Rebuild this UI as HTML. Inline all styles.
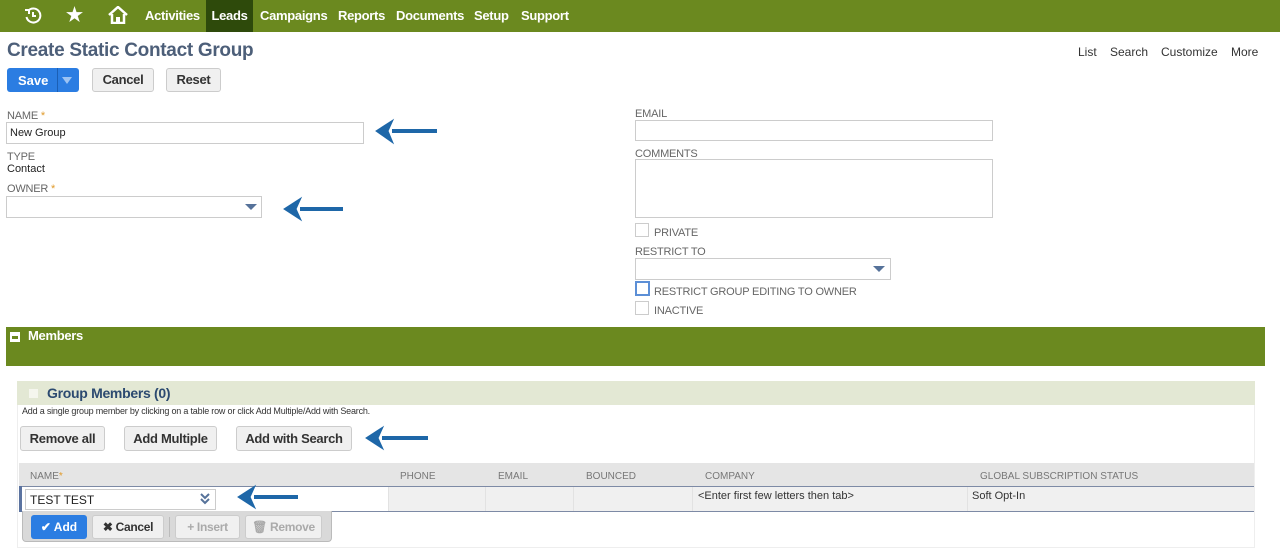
<!DOCTYPE html>
<html><head><meta charset="utf-8"><style>
*{box-sizing:border-box;margin:0;padding:0}
body{width:1280px;height:557px;overflow:hidden;background:#fff;font-family:"Liberation Sans",Arial,sans-serif;position:relative;color:#333}
.a{position:absolute}
.nav{left:0;top:0;width:1280px;height:32px;background:#6b891f}
.nav span{position:absolute;top:0;height:32px;line-height:32px;color:#fff;font-weight:bold;font-size:13px;letter-spacing:-0.3px}
.lbl{position:absolute;font-size:11px;color:#666;letter-spacing:-0.2px}
.inp{position:absolute;border:1px solid #ccc;background:#fff}
.btn{position:absolute;background:#f0f0f0;border:1px solid #ccc;border-radius:3px;font-size:13px;font-weight:bold;color:#333;text-align:center;letter-spacing:-0.3px}
.cb{position:absolute;width:14px;height:14px;border:1px solid #ccc;background:#fff}
.tri{position:absolute;width:0;height:0;border-left:6px solid transparent;border-right:6px solid transparent;border-top:6px solid #56729a}
.th{position:absolute;top:471px;font-size:10px;color:#777}
.col{position:absolute;top:487px;height:24px;border-left:1px solid #e2e2e2}
</style></head><body>
<div class="a nav">
<svg class="a" style="left:24px;top:7px" width="18" height="18" viewBox="0 0 18 18"><path d="M4 4 A7 7 0 1 1 2.5 10" fill="none" stroke="#fff" stroke-width="2"/><path d="M1 3 L5 3 L5 7" fill="none" stroke="#fff" stroke-width="2"/><path d="M9 5 V9 H12" fill="none" stroke="#fff" stroke-width="2"/></svg>
<span style="left:66px;font-size:19px">★</span>
<svg class="a" style="left:108px;top:6px" width="20" height="18" viewBox="0 0 20 18"><path d="M1 9 L10 1 L19 9" fill="none" stroke="#fff" stroke-width="2.5"/><path d="M4 8 V17 H16 V8" fill="none" stroke="#fff" stroke-width="2.5"/><rect x="8" y="11" width="4" height="6" fill="#fff"/></svg>
<span style="left:145px">Activities</span>
<span style="left:206px;width:47px;background:#2e4a0b;text-align:center">Leads</span>
<span style="left:260px">Campaigns</span>
<span style="left:338px">Reports</span>
<span style="left:396px">Documents</span>
<span style="left:474px">Setup</span>
<span style="left:521px">Support</span>
</div>
<div class="a" style="left:7px;top:40px;font-size:19px;font-weight:bold;color:#4d5f79;letter-spacing:-0.3px">Create Static Contact Group</div>
<div class="a" style="top:45px;left:1078px;font-size:12px;color:#333">List</div>
<div class="a" style="top:45px;left:1110px;font-size:12px;color:#333">Search</div>
<div class="a" style="top:45px;left:1161px;font-size:12px;color:#333">Customize</div>
<div class="a" style="top:45px;left:1231px;font-size:12px;color:#333">More</div>
<div class="a" style="left:7px;top:68px;width:72px;height:24px;background:#2b7de2;border-radius:3px"></div>
<div class="a" style="left:18px;top:73px;color:#fff;font-weight:bold;font-size:13px">Save</div>
<div class="a" style="left:57px;top:68px;width:1px;height:24px;background:#1b5fb5"></div>
<div class="tri" style="left:62px;top:77px;border-top-color:#9cc3f3;border-left-width:5px;border-right-width:5px;border-top-width:7px"></div>
<div class="btn" style="left:92px;top:68px;width:62px;height:24px;line-height:22px">Cancel</div>
<div class="btn" style="left:166px;top:68px;width:55px;height:24px;line-height:22px">Reset</div>

<div class="lbl" style="left:7px;top:110px">NAME <span style="color:#e09a2a">*</span></div>
<div class="inp" style="left:6px;top:122px;width:358px;height:22px;font-size:11px;color:#222;padding:4px 3px">New Group</div>
<div class="lbl" style="left:7px;top:151px">TYPE</div>
<div class="a" style="left:7px;top:163px;font-size:11px;color:#222">Contact</div>
<div class="lbl" style="left:7px;top:183px">OWNER <span style="color:#e09a2a">*</span></div>
<div class="inp" style="left:6px;top:196px;width:256px;height:22px"></div>
<div class="tri" style="left:245px;top:204px"></div>

<div class="lbl" style="left:635px;top:108px">EMAIL</div>
<div class="inp" style="left:635px;top:120px;width:358px;height:21px"></div>
<div class="lbl" style="left:635px;top:148px">COMMENTS</div>
<div class="inp" style="left:635px;top:159px;width:358px;height:59px"></div>
<div class="cb" style="left:635px;top:223px"></div>
<div class="lbl" style="left:654px;top:227px">PRIVATE</div>
<div class="lbl" style="left:635px;top:246px">RESTRICT TO</div>
<div class="inp" style="left:635px;top:258px;width:256px;height:22px"></div>
<div class="tri" style="left:873px;top:266px"></div>
<div class="cb" style="left:635px;top:281px;width:15px;height:15px;border:2px solid #5c8fd6"></div>
<div class="lbl" style="left:654px;top:286px">RESTRICT GROUP EDITING TO OWNER</div>
<div class="cb" style="left:635px;top:301px"></div>
<div class="lbl" style="left:654px;top:305px">INACTIVE</div>

<div class="a" style="left:6px;top:327px;width:1259px;height:39px;background:#6b891f"></div>
<div class="a" style="left:10px;top:332px;width:10px;height:10px;background:#fff"></div>
<div class="a" style="left:12px;top:336px;width:6px;height:3px;background:#6b891f"></div>
<div class="a" style="left:28px;top:328px;color:#fff;font-weight:bold;font-size:13px;letter-spacing:-0.3px">Members</div>

<div class="a" style="left:17px;top:381px;width:1238px;height:167px;border:1px solid #eee;border-top:none"></div>
<div class="a" style="left:17px;top:381px;width:1238px;height:24px;background:#e3e8d4"></div>
<div class="a" style="left:29px;top:389px;width:9px;height:9px;background:#f5f6ee"></div>
<div class="a" style="left:47px;top:385px;font-size:14px;font-weight:bold;color:#2c4a70;letter-spacing:-0.3px">Group Members (0)</div>
<div class="a" style="left:22px;top:406px;font-size:9px;color:#333;letter-spacing:-0.2px">Add a single group member by clicking on a table row or click Add Multiple/Add with Search.</div>
<div class="btn" style="left:20px;top:426px;width:85px;height:25px;line-height:23px">Remove all</div>
<div class="btn" style="left:124px;top:426px;width:93px;height:25px;line-height:23px">Add Multiple</div>
<div class="btn" style="left:236px;top:426px;width:116px;height:25px;line-height:23px">Add with Search</div>

<div class="a" style="left:19px;top:463px;width:1235px;height:24px;background:#e5e5e5"></div>
<div class="th" style="left:30px">NAME<span style="color:#e09a2a">*</span></div>
<div class="th" style="left:400px">PHONE</div>
<div class="th" style="left:498px">EMAIL</div>
<div class="th" style="left:586px">BOUNCED</div>
<div class="th" style="left:705px">COMPANY</div>
<div class="th" style="left:980px">GLOBAL SUBSCRIPTION STATUS</div>
<div class="a" style="left:19px;top:486px;width:1235px;height:26px;background:#f0f0f0;border-top:1px solid #7d8aa5;border-bottom:1px solid #7d8aa5"></div>
<div class="a" style="left:19px;top:486px;width:3px;height:26px;background:#5b73a0"></div>
<div class="a" style="left:22px;top:487px;width:366px;height:24px;background:#fff"></div>
<div class="col" style="left:388px"></div><div class="col" style="left:485px"></div><div class="col" style="left:573px"></div><div class="col" style="left:692px"></div><div class="col" style="left:967px"></div>
<div class="inp" style="left:25px;top:489px;width:191px;height:21px;font-size:12px;color:#222;padding:3px 4px">TEST TEST</div>
<svg class="a" style="left:199px;top:493px" width="12" height="12" viewBox="0 0 12 12"><path d="M2 1 L6 5 L10 1 M2 6 L6 10 L10 6" fill="none" stroke="#56729a" stroke-width="2"/></svg>
<div class="a" style="left:698px;top:490px;font-size:11px;color:#333">&lt;Enter first few letters then tab&gt;</div>
<div class="a" style="left:972px;top:490px;font-size:11px;color:#333">Soft Opt-In</div>

<div class="a" style="left:22px;top:511px;width:310px;height:31px;background:#d9d9d9;border:1px solid #bbb;border-top:none;border-radius:0 0 4px 4px"></div>
<div class="a" style="left:31px;top:515px;width:56px;height:24px;background:#2b7de2;border-radius:3px;color:#fff;font-weight:bold;font-size:12px;line-height:24px;text-align:center">✔ Add</div>
<div class="btn" style="left:92px;top:515px;width:72px;height:24px;line-height:22px;font-size:12px">✖ Cancel</div>
<div class="a" style="left:169px;top:517px;width:1px;height:20px;background:#bbb"></div>
<div class="btn" style="left:175px;top:515px;width:65px;height:24px;line-height:22px;font-size:12px;color:#aaa">+ Insert</div>
<div class="btn" style="left:245px;top:515px;width:77px;height:24px;line-height:22px;font-size:12px;color:#aaa">🗑 Remove</div>

<svg class="a" style="left:0;top:0" width="1280" height="557">
<g stroke="#1e67a8" stroke-width="4" fill="#1e67a8">
<path d="M392 131 H437"/><path d="M393 120 L376 131 L393 143 L388 131 Z" stroke-width="1"/>
<path d="M300 209 H343"/><path d="M301 198 L284 209 L301 220 L296 209 Z" stroke-width="1"/>
<path d="M382 438 H428"/><path d="M383 427 L366 438 L383 449 L378 438 Z" stroke-width="1"/>
<path d="M254 497 H298"/><path d="M255 486 L238 497 L255 508 L250 497 Z" stroke-width="1"/>
</g></svg>
</body></html>
